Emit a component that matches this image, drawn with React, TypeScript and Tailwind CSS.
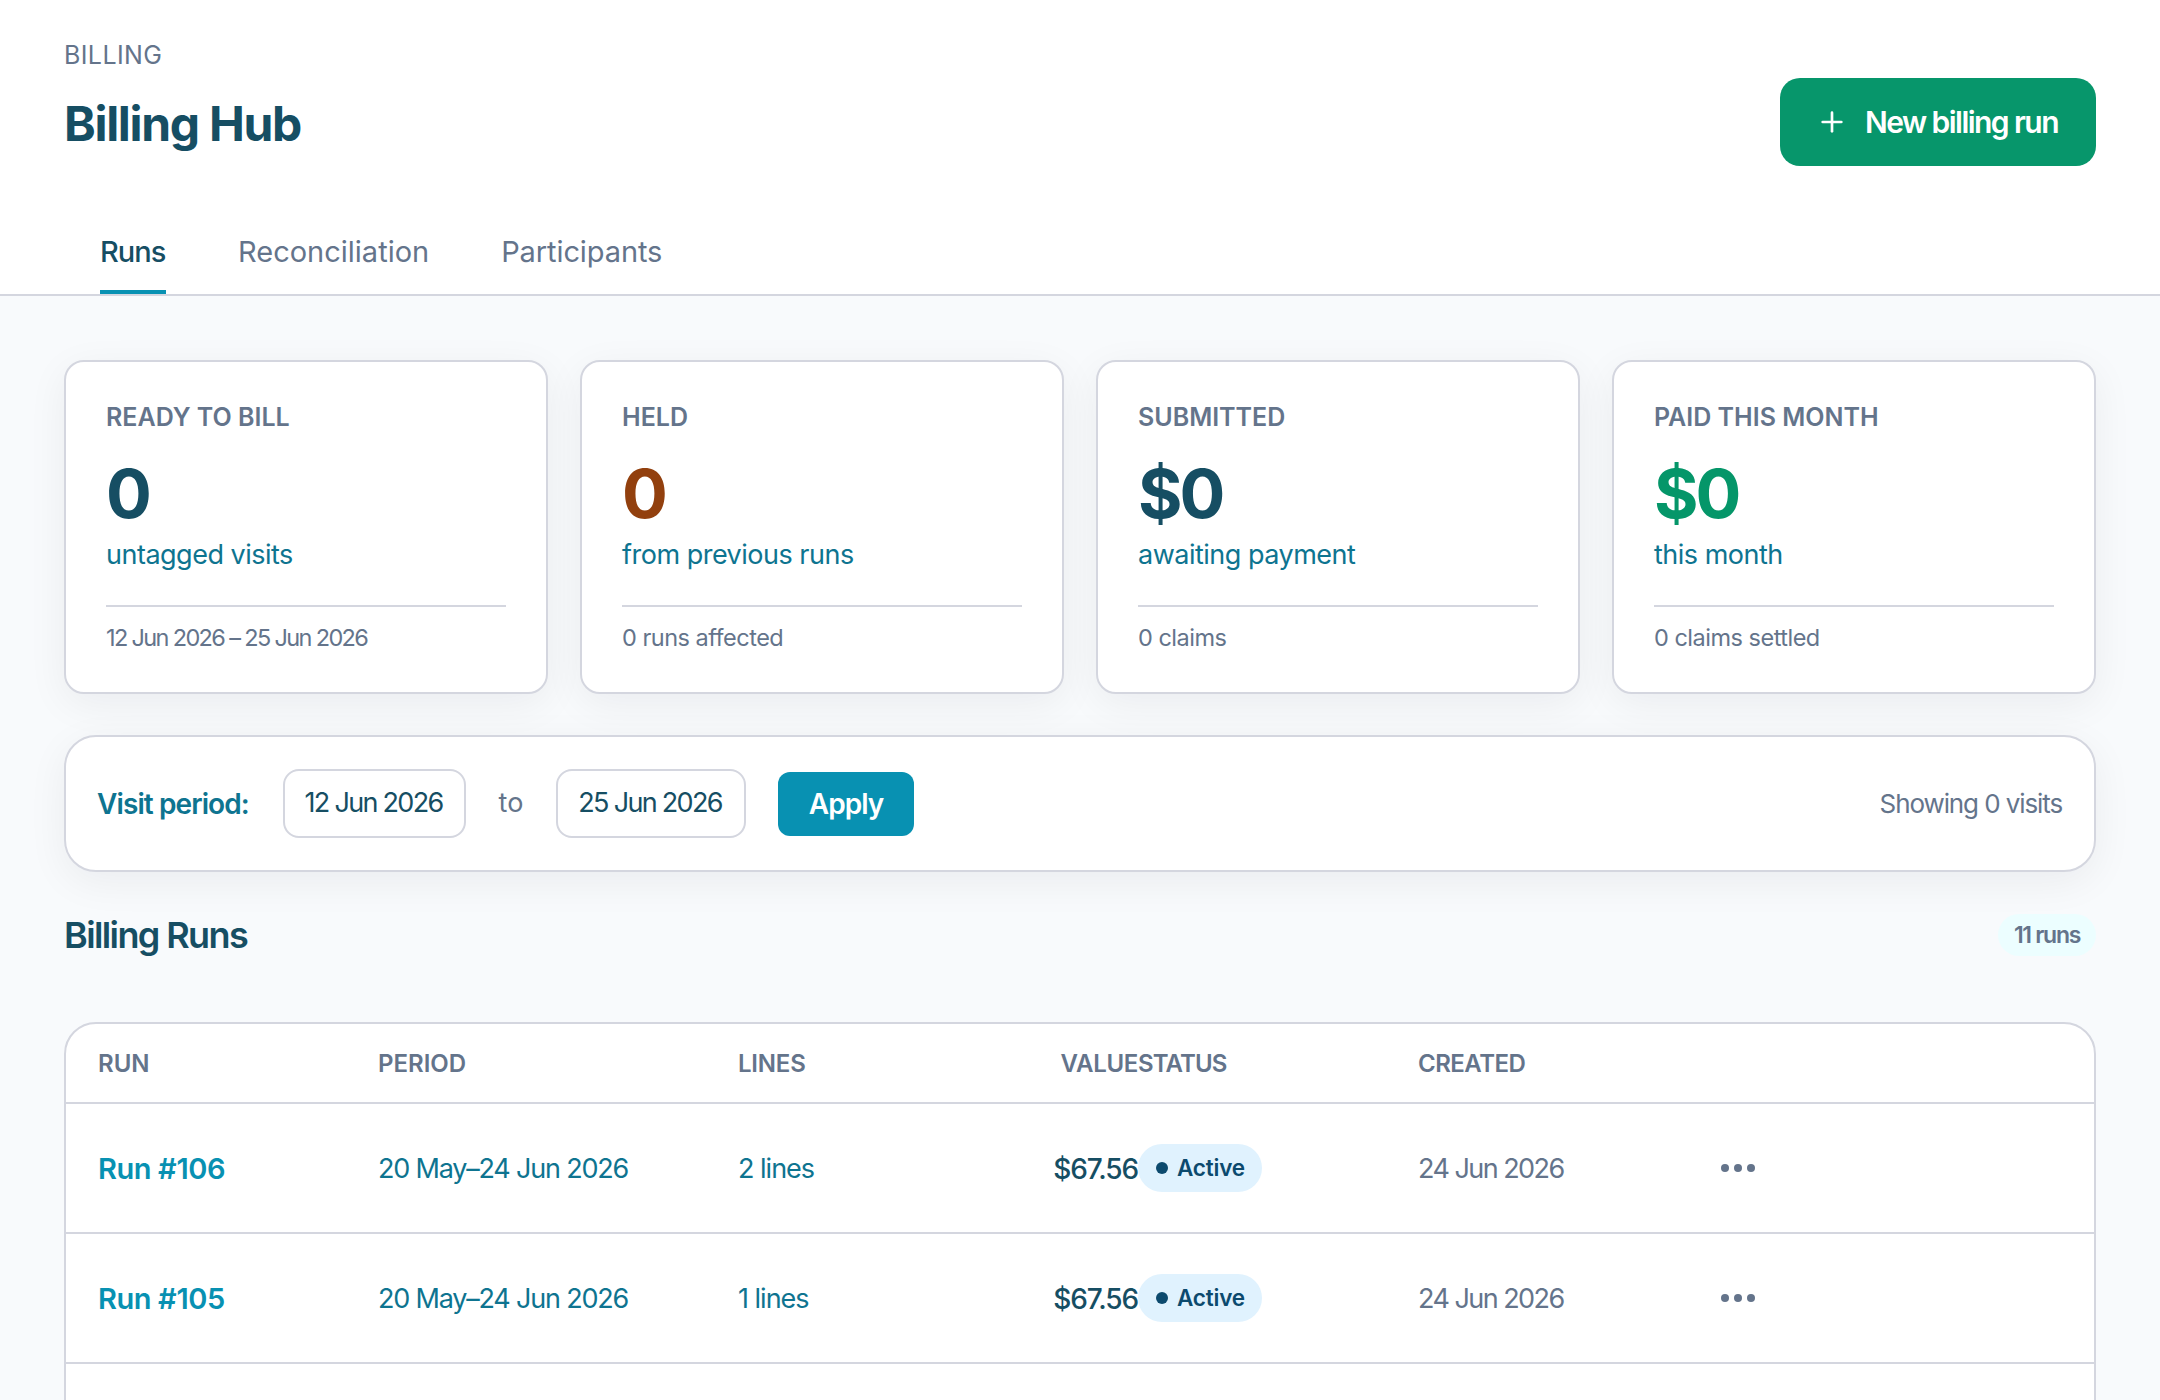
import { Plus } from "lucide-react";

const STATS = [
  { label: "READY TO BILL", value: "0", valueColor: "text-[#164e63]", sub: "untagged visits", foot: "12 Jun 2026 – 25 Jun 2026", footTrack: "tracking-[-1.65px]" },
  { label: "HELD", value: "0", valueColor: "text-[#92400e]", sub: "from previous runs", foot: "0 runs affected", footTrack: "tracking-[-0.5px]" },
  { label: "SUBMITTED", value: "$0", valueColor: "text-[#164e63]", sub: "awaiting payment", foot: "0 claims", footTrack: "tracking-[-0.5px]" },
  { label: "PAID THIS MONTH", value: "$0", valueColor: "text-[#059669]", sub: "this month", foot: "0 claims settled", footTrack: "tracking-[-0.5px]" },
];

const RUNS = [
  { id: "Run #106", period: "20 May–24 Jun 2026", lines: "2 lines", value: "$67.56", created: "24 Jun 2026" },
  { id: "Run #105", period: "20 May–24 Jun 2026", lines: "1 lines", value: "$67.56", created: "24 Jun 2026" },
];

const ROW_COLS = "grid grid-cols-[312px_360px_302px_98px_280px_303px_1fr] items-center";

function StatCard({ stat }: { stat: (typeof STATS)[number] }) {
  return (
    <div className="rounded-[20px] border-2 border-[#d4d6df] bg-white px-[40px] pt-[40px] pb-[38px] shadow-[0_10px_40px_rgba(15,23,42,0.06)]">
      <div className="text-[25px] leading-[30px] font-semibold text-[#64748b]">{stat.label}</div>
      <div className={`mt-[21px] text-[68px] leading-[80px] font-bold tracking-[-3px] ${stat.valueColor}`}>{stat.value}</div>
      <div className="mt-[2px] text-[27px] leading-[40px] tracking-[-0.5px] text-[#0e7490]">{stat.sub}</div>
      <div className={`mt-[30px] border-t-2 border-[#d4d6df] pt-[15px] text-[23.5px] leading-[32px] text-[#64748b] ${stat.footTrack}`}>
        {stat.foot}
      </div>
    </div>
  );
}

function DateBox({ value, width }: { value: string; width: string }) {
  return (
    <div className={`flex h-[69px] items-center justify-center rounded-[16px] border-2 border-[#d4d6df] bg-white pr-[2px] text-[27px] tracking-[-1.7px] text-[#164e63] ${width}`}>
      {value}
    </div>
  );
}

function RunRow({ run }: { run: (typeof RUNS)[number] }) {
  return (
    <div className={`${ROW_COLS} h-[130px] border-b-2 border-[#d4d6df]`}>
      <a className="pt-[2px] pl-[32px] text-[29px] font-semibold tracking-[-0.4px] text-[#0891b2]">{run.id}</a>
      <div className="pt-[2px] text-[27px] tracking-[-1.2px] text-[#0e7490]">{run.period}</div>
      <div className="pt-[2px] text-[27px] tracking-[-1px] text-[#0e7490]">{run.lines}</div>
      <div className="pt-[2px] text-right text-[28px] font-medium tracking-[-1.1px] text-[#164e63]">{run.value}</div>
      <div>
        <span className="inline-flex h-[48px] w-[124px] items-center gap-[9px] rounded-full bg-[#e0f2fe] pl-[18px] text-[22.5px] font-semibold tracking-[-0.2px] text-[#0c4a6e]">
          <span className="h-[12px] w-[12px] rounded-full bg-[#0c4a6e]" />
          Active
        </span>
      </div>
      <div className="pt-[2px] text-[27px] tracking-[-1.55px] text-[#64748b]">{run.created}</div>
      <svg width="34" height="8" viewBox="0 0 34 8" className="fill-[#64748b]">
        <circle cx="4" cy="4" r="4" />
        <circle cx="17" cy="4" r="4" />
        <circle cx="30" cy="4" r="4" />
      </svg>
    </div>
  );
}

export default function App() {
  return (
    <div className="h-[1400px] overflow-hidden bg-[#f8fafc] [font-family:Inter,sans-serif]">
      <header className="border-b-2 border-[#d4d6df] bg-white px-[64px] pt-[40px]">
        <div className="flex items-end justify-between">
          <div className="pb-[12px]">
            <div className="text-[25px] leading-[30px] tracking-[0.4px] text-[#64748b]">BILLING</div>
            <h1 className="mt-[24px] text-[48px] leading-[60px] font-bold tracking-[-1.3px] text-[#164e63]">Billing Hub</h1>
          </div>
          <button
            type="button"
            className="flex h-[88px] w-[316px] items-center gap-[17px] rounded-[20px] bg-[#07966b] pl-[36px] text-[30px] font-semibold tracking-[-1.55px] text-white"
          >
            <Plus className="h-[32px] w-[32px]" strokeWidth={2} />
            New billing run
          </button>
        </div>
        <nav className="mt-[66px] flex gap-[72px] pl-[36px] text-[29px] leading-[40px]">
          <div className="w-[66px] border-b-4 border-[#0891b2] pb-[18px] font-medium tracking-[-1px] text-[#164e63]">Runs</div>
          <div className="pb-[22px] tracking-[0px] text-[#64748b]">Reconciliation</div>
          <div className="pb-[22px] tracking-[-0.1px] text-[#64748b]">Participants</div>
        </nav>
      </header>

      <main className="px-[64px] pt-[64px]">
        <div className="grid grid-cols-4 gap-[32px]">
          {STATS.map((s) => (
            <StatCard key={s.label} stat={s} />
          ))}
        </div>

        <div className="mt-[41px] flex h-[137px] items-center rounded-[32px] border-2 border-[#d4d6df] bg-white pr-[32px] pl-[31px] shadow-[0_10px_40px_rgba(15,23,42,0.06)]">
          <span className="w-[186px] text-[28px] font-semibold tracking-[-0.9px] text-[#0e7490]">Visit period:</span>
          <DateBox value="12 Jun 2026" width="w-[183px]" />
          <span className="w-[90px] text-center text-[27px] text-[#64748b]">to</span>
          <DateBox value="25 Jun 2026" width="w-[190px]" />
          <button type="button" className="ml-[32px] h-[64px] w-[136px] rounded-[12px] bg-[#0891b2] text-[28px] font-semibold tracking-[-1px] text-white">
            Apply
          </button>
          <span className="ml-auto text-[26px] tracking-[-1.1px] text-[#64748b]">Showing 0 visits</span>
        </div>

        <div className="mt-[39px] flex items-center justify-between">
          <h2 className="text-[36px] leading-[48px] font-semibold tracking-[-1.6px] text-[#164e63]">Billing Runs</h2>
          <span className="rounded-full bg-[#ecfeff] px-[16px] py-[4px] text-[23px] font-semibold tracking-[-1.3px] text-[#64748b]">11 runs</span>
        </div>

        <div className="mt-[63px] h-[600px] rounded-t-[32px] border-2 border-[#d4d6df] bg-white">
          <div className={`${ROW_COLS} h-[80px] border-b-2 border-[#d4d6df] pt-[2px] text-[24px] font-semibold text-[#64748b]`}>
            <div className="pl-[32px]">RUN</div>
            <div>PERIOD</div>
            <div className="tracking-[-0.2px]">LINES</div>
            <div className="text-right tracking-[-0.3px]">VALUE</div>
            <div className="tracking-[-0.9px]">STATUS</div>
            <div className="tracking-[-0.5px]">CREATED</div>
          </div>
          {RUNS.map((r) => (
            <RunRow key={r.id} run={r} />
          ))}
        </div>
      </main>
    </div>
  );
}
